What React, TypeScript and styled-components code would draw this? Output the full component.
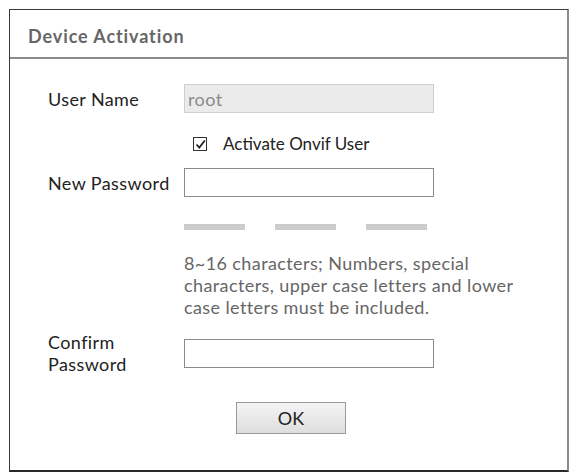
import React, { useState } from 'react'
import styled, { createGlobalStyle } from 'styled-components'

const GlobalStyle = createGlobalStyle`
    html, body {
        margin: 0;
        padding: 0;
        background: #ffffff;
    }
    body {
        font-family: Lato, 'Open Sans', sans-serif;
    }
`

const Page = styled.div`
    padding: 9px 0 0 9px;
`

const Dialog = styled.div`
    width: 557px;
    height: 460px;
    border: 1px solid #3a3a3a;
    border-right: 2px solid #8a8a8a;
    border-bottom: 2px solid #2a2a2a;
    background: #fff;
    display: flex;
    flex-direction: column;
`

const Header = styled.div`
    height: 43px;
    padding: 4px 0 0 18px;
    border-bottom: 2px solid #8c8c8c;
    display: flex;
    align-items: center;
    font-size: 18px;
    font-weight: 700;
    letter-spacing: 0.9px;
    color: #666;
`

const Body = styled.div`
    padding: 25px 0 0 38px;
    display: flex;
    flex-direction: column;
`

const Row = styled.div<{ $mt?: number }>`
    display: grid;
    grid-template-columns: 136px 250px;
    align-items: center;
    margin-top: ${(p) => p.$mt ?? 0}px;
`

const Label = styled.label`
    font-size: 18px;
    letter-spacing: 0.4px;
    color: #222;
    line-height: 22px;
`

const Input = styled.input<{ $disabled?: boolean }>`
    box-sizing: border-box;
    width: 250px;
    height: 29px;
    margin: 0;
    padding: 0 3px;
    border: 1px solid ${(p) => (p.$disabled ? '#cfcfcf' : '#8a8a8a')};
    background: ${(p) => (p.$disabled ? '#ebebeb' : '#fff')};
    color: #8a8a8a;
    font-family: inherit;
    font-size: 18px;
    letter-spacing: 0.4px;
    outline: none;
`

const CheckLine = styled.label`
    grid-column: 1 / -1;
    display: flex;
    align-items: center;
    gap: 16px;
    margin-left: 145px;
    font-size: 17px;
    line-height: 22px;
    color: #222;
    cursor: pointer;
`

const Box = styled.span`
    box-sizing: border-box;
    width: 14px;
    height: 14px;
    border: 1px solid #333;
    display: flex;
    align-items: center;
    justify-content: center;
`

const Bars = styled.div`
    display: flex;
    gap: 30px;
    margin: 27px 0 0 136px;
`

const Bar = styled.div`
    width: 61px;
    height: 6px;
    background: #cccccc;
`

const Hint = styled.div`
    margin: 22px 0 0 136px;
    width: 336px;
    font-size: 18px;
    letter-spacing: 0.4px;
    line-height: 22px;
    color: #666;
`

const Actions = styled.div`
    display: flex;
    margin: 27px 0 0 188px;
`

const OkButton = styled.button`
    width: 110px;
    height: 32px;
    border: 1px solid #9a9a9a;
    background: linear-gradient(#f4f4f4, #dedede);
    font-family: inherit;
    font-size: 18px;
    color: #222;
    padding: 0;
`

export default function App() {
    const [activate, setActivate] = useState(true)

    return (
        <Page>
            <GlobalStyle />
            <Dialog>
                <Header>Device Activation</Header>
                <Body>
                    <Row>
                        <Label>User Name</Label>
                        <Input $disabled value="root" readOnly />
                    </Row>
                    <Row $mt={20}>
                        <CheckLine onClick={() => setActivate(!activate)}>
                            <Box>
                                {activate && (
                                    <svg width="11" height="11" viewBox="0 0 11 11">
                                        <path d="M1.5 5.5 L4.3 8.5 L9.8 1.5" fill="none" stroke="#222" strokeWidth="1.8" />
                                    </svg>
                                )}
                            </Box>
                            Activate Onvif User
                        </CheckLine>
                    </Row>
                    <Row $mt={13}>
                        <Label>New Password</Label>
                        <Input type="password" />
                    </Row>
                    <Bars>
                        <Bar />
                        <Bar />
                        <Bar />
                    </Bars>
                    <Hint>
                        8~16 characters; Numbers, special characters, upper case letters and lower case letters must be included.
                    </Hint>
                    <Row $mt={13}>
                        <Label>
                            Confirm
                            <br />
                            Password
                        </Label>
                        <Input type="password" />
                    </Row>
                    <Actions>
                        <OkButton>OK</OkButton>
                    </Actions>
                </Body>
            </Dialog>
        </Page>
    )
}
